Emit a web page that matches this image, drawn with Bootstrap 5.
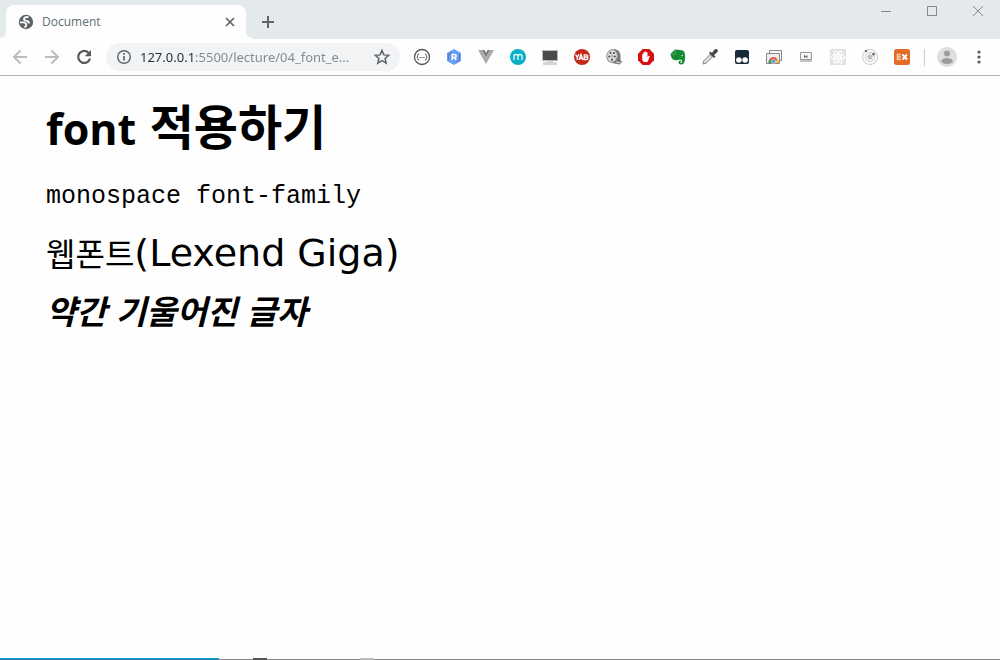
<!DOCTYPE html>
<html lang="ko">
<head>
<meta charset="utf-8">
<meta name="viewport" content="width=device-width, initial-scale=1">
<title>Document</title>
<link href="https://cdn.jsdelivr.net/npm/bootstrap@5.3.0/dist/css/bootstrap.min.css" rel="stylesheet">
<script src="https://cdn.jsdelivr.net/npm/bootstrap@5.3.0/dist/js/bootstrap.bundle.min.js" defer></script>
<style>
  body { background: #fefefe; color: #000; font-family: "Open Sans", "Noto Sans CJK KR", sans-serif; }
  button { background: none; border: 0; padding: 0; color: #5f6368; }
  button svg, .tab svg { display: block; }
  .strip { height: 39px; background: #e4e9ec; padding-left: 6px; }
  .tab { position: relative; width: 240px; height: 34px; background: #fefefe; border-radius: 8px 8px 0 0; padding: 0 10px 0 12px; font-size: 12px; color: #5f7074; }
  .tab::before, .tab::after { content: ""; position: absolute; bottom: 0; width: 6px; height: 8px; }
  .tab::before { right: 100%; background: radial-gradient(circle at 0 0, #e4e9ec 6px, #fefefe 7px); }
  .tab::after { left: 100%; background: radial-gradient(circle at 100% 0, #e4e9ec 6px, #fefefe 7px); }
  .plus { margin: 0 0 9px 15px; }
  .winbtn { width: 46px; height: 22px; color: #888; display: flex; justify-content: center; align-items: center; }
  .wins { margin-right: -1px; }
  .tools { height: 37px; border-bottom: 1px solid #b5b5b5; padding: 0 12px 0 11px; }
  .nav-set { gap: 14px; margin-right: 13px; }
  .address { height: 28px; background: #f1f3f4; border-radius: 14px; padding: 0 9px; gap: 7px; }
  .address input { min-width: 0; width: 100%; border: 0; outline: 0; padding: 0; font-family: "Noto Sans", sans-serif; font-size: 13px; line-height: 20px; color: transparent;
    background: linear-gradient(90deg, #202a3c 56px, #7d898e 56px); -webkit-background-clip: text; background-clip: text; }
  .exts { gap: 14px; margin-left: 13px; }
  .split { width: 1px; height: 17px; background: #ccc; margin: 0 12px 0 13px; }
  .dots { margin-left: 13px; }
  .content-area { padding: 12px 46px; }
  .content-area h1, .content-area p { font-family: "Noto Sans CJK KR", sans-serif; }
  .content-area h1 { font-size: 48px; font-weight: 700; line-height: 72px; margin-bottom: 10px; }
  h1 span { font-family: "Open Sans", sans-serif; font-size: 43px; }
  .content-area p { font-size: 32px; line-height: 48px; margin-bottom: 9px; }
  .content-area .fixed-type { font-family: "Liberation Mono", monospace; font-size: 25px; line-height: 44px; }
  .web-type span { font-family: "DejaVu Sans", sans-serif; font-size: 38px; }
  .content-area .slanted { font-size: 33px; font-weight: 700; font-style: italic; }
  .progress-line { height: 2px; background: linear-gradient(transparent 1px, #888 1px); }
  .progress-line .done { width: 21.9%; height: 2px; background: #00a4e4; border-bottom: 1px solid #287da5; }
  .progress-line .hint { width: 14px; margin-left: 34px; background: #555; }
  .progress-line .hint + .hint { margin-left: 93px; background: #bbb; }
</style>
</head>
<body class="d-flex flex-column min-vh-100">
<header>
  <div class="strip d-flex align-items-end">
    <div class="tab d-flex align-items-center">
      <svg width="16" height="16" viewBox="0 0 16 16"><circle cx="8" cy="8" r="7.200" fill="#5f6368"/><path d="M10.500 3Q6 2.800 6 5q0 1.500 2.300 1.800Q11 7 11 9.500M2 8.300h3.500Q8.500 8.700 8.300 11q-.3 1.500-1.800 2.500" fill="none" stroke="#fefefe" stroke-width="1.800"/></svg>
      <span class="ms-2 flex-grow-1">Document</span>
      <button aria-label="Close tab"><svg width="12" height="12" viewBox="0 0 12 12"><path d="m2 2 8 8m0-8-8 8" stroke="currentColor" stroke-width="1.700"/></svg></button>
    </div>
    <button class="plus" aria-label="New tab"><svg width="14" height="16" viewBox="0 0 14 16"><path d="M7 2v12M1 8h12" stroke="currentColor" stroke-width="2"/></svg></button>
    <div class="wins d-flex ms-auto align-self-start">
      <button class="winbtn" aria-label="Minimize"><svg width="10" height="10"><path d="M0 5.500h10" stroke="currentColor"/></svg></button>
      <button class="winbtn" aria-label="Maximize"><svg width="10" height="10"><path d="M.5.5h9v9h-9z" fill="none" stroke="currentColor"/></svg></button>
      <button class="winbtn" aria-label="Close"><svg width="10" height="10"><path d="m0 0 10 10M10 0 0 10" stroke="currentColor"/></svg></button>
    </div>
  </div>
  <div class="tools d-flex align-items-center">
    <div class="nav-set d-flex">
      <button aria-label="Back"><svg width="18" height="18" viewBox="0 0 18 18" fill="none" stroke="#bcbcbc" stroke-width="2"><path d="M16 9H3M9.500 2.500 3 9l6.500 6.500"/></svg></button>
      <button aria-label="Forward"><svg width="18" height="18" viewBox="0 0 18 18" fill="none" stroke="#bcbcbc" stroke-width="2"><path d="M2 9h13M8.500 2.500 15 9l-6.500 6.500"/></svg></button>
      <button aria-label="Reload"><svg width="18" height="18" viewBox="0 0 18 18"><path d="M14 5.300A6 6 0 1 0 15 10.500" fill="none" stroke="#55595d" stroke-width="2.200"/><path d="M16 2v6.300H9.700z" fill="#55595d"/></svg></button>
    </div>
    <div class="address d-flex align-items-center flex-grow-1">
      <button aria-label="Site information"><svg width="18" height="18" viewBox="0 0 18 18"><circle cx="9" cy="9" r="6.300" fill="none" stroke="currentColor" stroke-width="1.400"/><path d="M9 8v4.500M9 5v1.700" stroke="currentColor" stroke-width="1.700"/></svg></button>
      <input type="text" aria-label="Address" value="127.0.0.1:5500/lecture/04_font_e...">
      <button aria-label="Bookmark"><svg width="18" height="18" viewBox="0 0 18 18"><path d="m9 2.500 1.900 4.400 4.800.4-3.600 3.200 1.100 4.700L9 12.700l-4.200 2.500 1.100-4.700-3.600-3.200 4.800-.4z" fill="none" stroke="currentColor" stroke-width="1.500"/></svg></button>
    </div>
    <div class="exts d-flex">
      <button aria-label="JSON formatter"><svg width="18" height="18" viewBox="0 0 18 18" fill="none" stroke="#555"><circle cx="9" cy="9" r="7.500" stroke-width="1.300"/><path d="M6 5.800q-1.300 0-1.300 1.600T3.800 9q.9 0 .9 1.600T6 12.200M12 5.800q1.300 0 1.300 1.600t.9 1.600q-.9 0-.9 1.600t-1.300 1.600M6.500 9.500h1.200m.7 0h1.200m.7 0h1.200"/></svg></button>
      <button aria-label="R extension"><svg width="18" height="18" viewBox="0 0 18 18"><path d="m9 1 7 4v8l-7 4-7-4V5z" fill="#669df6"/><path d="M3.500 12V6.500L7 4m7.500 2v5.500L11 14" fill="none" stroke="#6078a8"/><path d="M7.300 12V6.500h2.200q1.700 0 1.700 1.500T9.500 9.500H7.300M9.300 9.500l2 2.500" fill="none" stroke="#fff" stroke-width="1.500"/></svg></button>
      <button aria-label="Vue devtools"><svg width="18" height="18" viewBox="0 0 18 18"><path d="M1 2h4l4 7 4-7h4L9 16z" fill="#ababab"/><path d="M5 2h2.500L9 5l1.500-3H13L9 9z" fill="#777"/></svg></button>
      <button aria-label="M extension"><svg width="18" height="18" viewBox="0 0 18 18"><circle cx="9" cy="9" r="8" fill="#09b0c5"/><path d="M5 12V6.500M5 8.500q0-2 2-2t2 2V12m0-3.500q0-2 2-2t2 2V12" fill="none" stroke="#e6fbfd" stroke-width="1.300"/></svg></button>
      <button aria-label="Screen"><svg width="18" height="18" viewBox="0 0 18 18"><path d="M1 2h16v11H1z" fill="#bbb"/><path d="M2 3h14v9H2z" fill="#4a4a4a"/><path d="M6 13h6v1h4v3H2v-3h4z" fill="#d5d5d5"/></svg></button>
      <button aria-label="YAB"><svg width="18" height="18" viewBox="0 0 18 18"><circle cx="9" cy="9" r="8" fill="#c62818"/><path d="m2.500 6.500 1.700 2.500L6 6.500M4.200 9v3M6 12l2-5.500L10 12M7 10.500h2M11.200 11.500v-4.700h2q1.500 0 1.500 1.200T13.200 9h-2 2q1.700 0 1.700 1.200t-1.700 1.300z" fill="none" stroke="#fff" stroke-width="1.300"/></svg></button>
      <button aria-label="Film"><svg width="18" height="18" viewBox="0 0 18 18"><path d="M4 2.500 10 1l4 2 1.500 4v5l1.500 2-2 2.500-6-1-5-2z" fill="#777"/><ellipse cx="7" cy="8" rx="5.300" ry="6.300" fill="#dcdcdc" stroke="#999" transform="rotate(12 7 8)"/><g fill="#555"><circle cx="7" cy="8" r=".7"/><circle cx="5.500" cy="5" r="1.100"/><circle cx="9" cy="5" r="1.100"/><circle cx="4.200" cy="8.500" r="1.100"/><circle cx="9.800" cy="8.500" r="1.100"/><circle cx="7" cy="11.700" r="1.100"/></g><path d="m11 14 5 1" stroke="#ddd"/></svg></button>
      <button aria-label="Blocker"><svg width="18" height="18" viewBox="0 0 18 18"><path d="M5.700 1h6.600L17 5.700v6.600L12.300 17H5.700L1 12.300V5.700z" fill="#d60f0f"/><path d="M5.200 10V6.200q.8-.8 1.200 0V4.500q.7-1 1.300 0v-.8q.8-1 1.400 0v.8q.8-1 1.400 0V9l1.300-1.300q1-.3.900.6L11 13q-.4 1-1.300 1H7.500Q5.200 14 5.200 10z" fill="#fff"/></svg></button>
      <button aria-label="Elephant notes"><svg width="18" height="18" viewBox="0 0 18 18"><path d="M2 5.500 6 1.500l5 .5q4 0 4.500 2.500 1.200 4 .4 7.500-.5 4.500-4.200 4.500-2.700-.4-2-3 .7-1.500 2.500-.8v1.100q-1.200-.2-1 .8.5.8 1.600.2l.3-2.800-2.500-.5q-2 1.500-5.900.2Q2 10.500 1.500 6z" fill="#128b32"/><path d="M2.300 6.200h4V2" fill="none" stroke="#77bd88" stroke-width=".6"/><path d="M12.500 7q1.600-.4 1.700 1.300l-1.700-.3z" fill="#e8f5e8"/></svg></button>
      <button aria-label="Eyedropper"><svg width="18" height="18" viewBox="0 0 18 18"><path d="m2 16 .7-3L9 6.500l2.500 2.500L5 15.300z" fill="#ddd" stroke="#858585"/><path d="m8 5 1.500-1.500L11 5l2.500-3.500q2-1.200 3 .3 1 1.500-.5 2.700L13 7l1.500 1.500L13 10z" fill="#454545"/></svg></button>
      <button aria-label="Night eyes"><svg width="18" height="18" viewBox="0 0 18 18"><rect x="2" y="2" width="14" height="14" rx="2" fill="#182a36"/><circle cx="5.900" cy="12" r="2.800" fill="#fff"/><circle cx="12.100" cy="12" r="2.800" fill="#fff"/></svg></button>
      <button aria-label="Image viewer"><svg width="18" height="18" viewBox="0 0 18 18"><path d="M4.500 5V2.500h12v10H14" fill="#f7f7f7" stroke="#888"/><path d="M1.500 5.500h13v10h-13z" fill="#eee" stroke="#888"/><path d="M3.500 15a5 6 0 0 1 10 0z" fill="#dd4e35"/><path d="M3.500 15q0-2.500 1.500-4l3 4z" fill="#3b9e55"/><path d="M13.500 15q0-2.500-1.500-4l-3 4z" fill="#f6bd25"/><circle cx="8.500" cy="13.300" r="2" fill="#4b8be5" stroke="#fff" stroke-width=".6"/></svg></button>
      <button aria-label="Window resizer"><svg width="18" height="18" viewBox="0 0 18 18"><path d="M3.500 4.500h11v7h-11z" fill="#f5f5f5" stroke="#999"/><path d="M3 12.500h12v1H3z" fill="#888"/><path d="M7.500 9.500v-2l2.500 2v-2" fill="none" stroke="#555"/></svg></button>
      <button aria-label="React devtools"><svg width="18" height="18" viewBox="0 0 18 18"><path d="M1 1h16v16H1z" fill="#e0e3e5"/><g fill="none" stroke="#fff" stroke-width="1.200"><ellipse cx="9" cy="9" rx="6.500" ry="2.500"/><ellipse cx="9" cy="9" rx="6.500" ry="2.500" transform="rotate(60 9 9)"/><ellipse cx="9" cy="9" rx="6.500" ry="2.500" transform="rotate(120 9 9)"/></g><circle cx="9" cy="9" r="1.400" fill="#fff"/></svg></button>
      <button aria-label="Orbit"><svg width="18" height="18" viewBox="0 0 18 18" fill="none" stroke="#c7c7c7"><circle cx="9" cy="9" r="7.500"/><circle cx="9" cy="9" r="4.500"/><circle cx="9" cy="9" r="2.300" fill="#bdbdbd"/><circle cx="5" cy="3" r="1.300" fill="#777" stroke="none"/><circle cx="12.500" cy="6" r="1.500" fill="#777" stroke="none"/></svg></button>
      <button aria-label="EX extension"><svg width="18" height="18" viewBox="0 0 18 18"><rect x="1" y="1" width="16" height="16" rx="2.500" fill="#e26b25"/><path d="M8 6.500H4.500v5H8M4.500 9H8" fill="none" stroke="#f9cfaa" stroke-width="1.500"/><path d="m9.500 6.500 4.500 5m0-5-4.500 5" stroke="#fff" stroke-width="1.900"/></svg></button>
    </div>
    <div class="split"></div>
    <button aria-label="Profile"><svg width="20" height="20" viewBox="0 0 20 20"><circle cx="10" cy="10" r="10" fill="#dedede"/><circle cx="10" cy="6.500" r="3" fill="#9a9da0"/><path d="M4 14.500Q5 11 10 11t6 3.500q-2 2.500-6 2.500t-6-2.500" fill="#9a9da0"/></svg></button>
    <button class="dots" aria-label="Menu"><svg width="18" height="18" viewBox="0 0 18 18" fill="#55595d"><circle cx="9" cy="4" r="1.600"/><circle cx="9" cy="9" r="1.600"/><circle cx="9" cy="14" r="1.600"/></svg></button>
  </div>
</header>
<main class="content-area flex-grow-1">
  <h1><span>font</span> 적용하기</h1>
  <p class="fixed-type">monospace font-family</p>
  <p class="web-type">웹폰트<span>(Lexend Giga)</span></p>
  <p class="slanted">약간 기울어진 글자</p>
</main>
<footer class="progress-line d-flex"><div class="done"></div><div class="hint"></div><div class="hint"></div></footer>
</body>
</html>
